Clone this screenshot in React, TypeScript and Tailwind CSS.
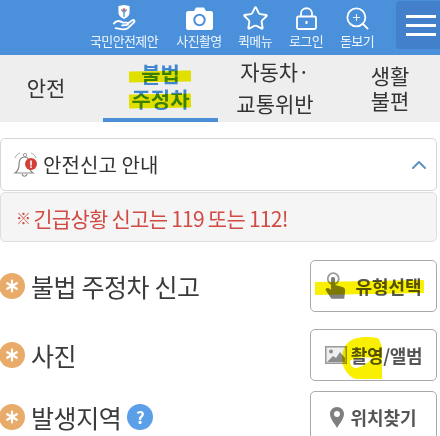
import { ChevronUp, Search, Star, Plus } from 'lucide-react';

const FONT = "font-['Noto_Sans_CJK_KR','Noto_Sans',sans-serif]";

// 상단 메뉴
function TopItem({ label, icon, className }: { label: string; icon: React.ReactNode; className: string }) {
  return (
    <div className={`flex flex-col items-center ${className}`}>
      <div className="h-[28px] flex items-center justify-center">{icon}</div>
      <span className="text-[13px] leading-[18px] tracking-[-0.6px] text-[#eef5fd] whitespace-nowrap">{label}</span>
    </div>
  );
}

function HandShield() {
  return (
    <svg width="24" height="26" viewBox="0 0 24 28" fill="none">
      <path d="M6 1 L12 0 L18 1 L18 8 C18 12 14 14 12 15 C10 14 6 12 6 8 Z" fill="#fff" />
      <path d="M9 5 L12 8 L15 5 M12 8 V13" stroke="#4a90d9" strokeWidth="1.4" />
      <circle cx="12" cy="5" r="1.6" fill="#c9695f" />
      <path d="M1 20 C4 16 8 17 11 19 L15 19 C17 19 17 21 15 21.500 L10 22 M16 20 L21 16.500 C23 15.500 24 17.500 22.500 19 L16 25 C13 27 7 26 3 25" stroke="#fff" strokeWidth="2" strokeLinecap="round" />
    </svg>
  );
}

function CameraIcon() {
  return (
    <svg width="27" height="23" viewBox="0 0 27 23">
      <path d="M2 4 H8 L10 0.500 H18 L20 4 H25 C26 4 27 5 27 6 V21 C27 22 26 23 25 23 H2 C1 23 0 22 0 21 V6 C0 5 1 4 2 4 Z" fill="#fff" />
      <circle cx="13.500" cy="13" r="5.200" fill="none" stroke="#4b90da" strokeWidth="2" />
    </svg>
  );
}

function LockIcon() {
  return (
    <svg width="21" height="23" viewBox="0 0 21 23" fill="none" stroke="#fff" strokeWidth="1.800">
      <rect x="1" y="9.500" width="19" height="12.500" rx="1.500" />
      <path d="M5 9.500 V6.500 C5 -0.500 16 -0.500 16 6.500 V9.500" />
      <rect x="9.500" y="14" width="2" height="3" fill="#fff" stroke="none" />
    </svg>
  );
}

function Bell() {
  return (
    <svg width="28" height="26" viewBox="0 0 28 26" fill="none">
      <path d="M3 6 C4 3 6 2 8 1 M19 1 C21 2 23 3 24 6" stroke="#aaa" strokeWidth="1" />
      <circle cx="13" cy="3" r="1.600" stroke="#999" strokeWidth="1" />
      <path d="M13 5 C8 5 7 9 7 13 C7 17 6 19 3 21 L21 21 C18 19 17 17 17 13 C17 9 17 5 13 5 Z" fill="#fff" stroke="#888" strokeWidth="1.200" />
      <path d="M10 22 C11 25 14 25 15 22" stroke="#888" strokeWidth="1.200" />
      <circle cx="19" cy="12" r="6" fill="#d2403a" />
      <rect x="18.200" y="8.500" width="1.600" height="5" fill="#fff" />
      <rect x="18.200" y="14.300" width="1.600" height="1.600" fill="#fff" />
    </svg>
  );
}

function Bullet() {
  return (
    <span className="-ml-[1px] w-[26px] h-[26px] rounded-full bg-[#e8ab6a] flex items-center justify-center shrink-0">
      <svg width="14" height="14" viewBox="0 0 14 14" stroke="#fff" strokeWidth="2.200" strokeLinecap="round">
        <path d="M7 1.500 V12.500 M2.200 4.200 L11.800 9.800 M11.800 4.200 L2.200 9.800" />
      </svg>
    </span>
  );
}

function PointerHand() {
  return (
    <svg width="22" height="28" viewBox="0 0 24 30" fill="#7f7f7f">
      <circle cx="9" cy="7" r="6" fill="none" stroke="#999" strokeWidth="2" />
      <path d="M6.500 7 C6.500 4.500 11 4.500 11 7 L11 14 L19 16 C21 16.500 22 18 22 20 L21 29 L7 29 L1 20 C0 18 2 16.500 4 17.500 L6.500 19 Z" />
    </svg>
  );
}

function PhotoIcon() {
  return (
    <svg width="22" height="18" viewBox="0 0 22 18">
      <rect x="0.750" y="0.750" width="20.500" height="16.500" fill="#efefef" stroke="#999" strokeWidth="1.500" />
      <circle cx="6" cy="5.500" r="2" fill="#8c8c8c" />
      <path d="M2 16 L8 10 L11 12 L15 6 L20 12 V16 Z" fill="#8c8c8c" />
    </svg>
  );
}

function PinIcon() {
  return (
    <svg width="14" height="21" viewBox="0 0 14 21">
      <path
        fillRule="evenodd"
        d="M7 0 C3 0 0 3 0 7 C0 12 5 17 7 21 C9 17 14 12 14 7 C14 3 11 0 7 0 Z M7 4 C8.700 4 10 5.300 10 7 C10 8.700 8.700 10 7 10 C5.300 10 4 8.700 4 7 C4 5.300 5.300 4 7 4 Z"
        fill="#7f7f7f"
      />
    </svg>
  );
}

function ReportRow({ label, extra, className, children }: { label: string; extra?: React.ReactNode; className: string; children: React.ReactNode }) {
  return (
    <div className={`flex items-center justify-between ${className}`}>
      <div className="flex items-center">
        <Bullet />
        <span className="ml-[6px] text-[25px] leading-[34px] tracking-[-0.4px] text-[#3a3a3a]">{label}</span>
        {extra}
      </div>
      {children}
    </div>
  );
}

export default function App() {
  return (
    <div className={`w-[440px] h-[436px] overflow-hidden bg-white relative ${FONT}`}>
      {/* 헤더 */}
      <div className="h-[55px] bg-[#4b90da] flex">
        <div className="flex-1 flex pt-[4px]">
          <TopItem label="국민안전제안" icon={<HandShield />} className="ml-[88px] w-[72px]" />
          <TopItem label="사진촬영" icon={<CameraIcon />} className="ml-[14px] w-[50px]" />
          <TopItem label="퀵메뉴" icon={<Star size={27} stroke="#fff" strokeWidth={1.700} />} className="ml-[13px] w-[36px]" />
          <TopItem label="로그인" icon={<LockIcon />} className="ml-[15px] w-[36px]" />
          <TopItem
            label="돋보기"
            icon={
              <span className="relative">
                <Search size={27} stroke="#fff" strokeWidth={1.600} />
                <Plus size={11} stroke="#fff" strokeWidth={2} className="absolute left-[7px] top-[7px]" />
              </span>
            }
            className="ml-[15px] w-[36px]"
          />
        </div>
        <div className="w-[44px] h-[48px] mt-[1px] rounded-l-[4px] bg-[#4280cb] flex flex-col justify-center gap-[6px] pl-[10px]">
          <div className="w-[30px] h-[3px] bg-white" />
          <div className="w-[30px] h-[3px] bg-white" />
          <div className="w-[30px] h-[3px] bg-white" />
        </div>
      </div>

      {/* 탭 */}
      <div className="h-[67px] bg-[#eeeeee] flex text-[21px] text-center text-[#333]">
        <div className="w-[103px] flex items-center justify-center pr-[11px] pb-[3px] leading-[30px]">안전</div>
        <div className="w-[115px] flex items-center justify-center pb-[2px] border-b-[4px] border-[#4b8fd6] text-[#3f86d0] font-bold leading-[25px]">
          <div className="relative">
            불법
            <br />
            주정차
            {/* 형광펜 표시 */}
            <div className="absolute left-[-3px] top-[10px] w-[62px] h-[11px] bg-[#f0f000] -rotate-1 mix-blend-multiply" />
            <div className="absolute left-[-3px] top-[33px] w-[62px] h-[14px] bg-[#f0f000] -rotate-1 mix-blend-multiply" />
          </div>
        </div>
        <div className="w-[114px] flex items-center justify-center pb-[3px] leading-[32px]">
          <div>
            자동차·
            <br />
            교통위반
          </div>
        </div>
        <div className="w-[108px] flex items-center justify-center pl-[8px] pb-[1px] leading-[25px]">
          <div>
            생활
            <br />
            불편
          </div>
        </div>
      </div>

      {/* 안전신고 안내 */}
      <div className="mt-[16px] w-[437px] h-[53px] bg-white border border-[#d6d6d6] rounded-[5px] flex items-center pl-[11px] pr-[5px]">
        <Bell />
        <span className="ml-[3px] text-[20px] tracking-[0.1px] text-[#333]">안전신고 안내</span>
        <ChevronUp size={24} stroke="#5f93bf" strokeWidth={2} className="ml-auto" />
      </div>
      <div className="mt-[1px] w-[437px] h-[50px] bg-[#f5f5f5] border border-[#dedede] rounded-[5px] flex items-center pl-[15px] pt-[3px] text-[21px] tracking-[-0.75px] text-[#d14a43]">
        <span className="text-[15px] font-bold mr-[3px]">※</span>긴급상황 신고는 119 또는 112!
      </div>

      {/* 신고 항목 */}
      <ReportRow label="불법 주정차 신고" className="mt-[18px] h-[52px] pr-[3px]">
        <button className="relative w-[127px] h-[52px] border border-[#aaaaaa] rounded-[5px] flex items-center justify-center text-[18px] font-bold text-[#555]">
          <PointerHand />
          <span className="ml-[8px]">유형선택</span>
          {/* 형광펜 표시 */}
          <div className="absolute left-[4px] top-[20px] w-[109px] h-[13px] bg-[#f8f000] -rotate-1 mix-blend-multiply" />
        </button>
      </ReportRow>
      <ReportRow label="사진" className="mt-[17px] h-[52px] pr-[3px]">
        <button className="relative w-[127px] h-[52px] border border-[#aaaaaa] rounded-[5px] flex items-center justify-center text-[18px] font-bold text-[#555]">
          <PhotoIcon />
          <span className="ml-[4px] tracking-[-0.3px]">촬영/앨범</span>
          {/* 형광펜 표시 */}
          <svg className="absolute left-[31px] top-[7px] mix-blend-multiply" width="40" height="42" viewBox="0 0 40 42">
            <path
              fillRule="evenodd"
              fill="#f8f000"
              d="M12 2 C20 -1 34 0 37 2 L40 10 L40 42 L14 42 C6 40 0 30 0 22 C0 12 4 5 12 2 Z M8 24 C12 20 24 20 30 21 C27 26 20 30 14 31 C10 31 8 28 8 24 Z"
            />
          </svg>
        </button>
      </ReportRow>
      <ReportRow
        label="발생지역"
        className="mt-[10px] h-[52px] pr-[3px]"
        extra={<span className="ml-[6px] w-[26px] h-[26px] rounded-full bg-[#5b9fe8] text-white text-[17px] font-bold flex items-center justify-center">?</span>}
      >
        <button className="w-[127px] h-[52px] border border-[#aaaaaa] rounded-[5px] flex items-center justify-center text-[18px] font-bold text-[#555]">
          <PinIcon />
          <span className="ml-[6px]">위치찾기</span>
        </button>
      </ReportRow>
    </div>
  );
}
